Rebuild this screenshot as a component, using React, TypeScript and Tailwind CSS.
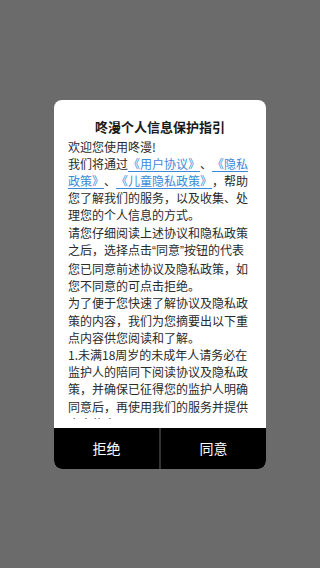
export default function App() {
  const link = "text-[#3a8ad8] underline decoration-[#3a8ad8] underline-offset-2";
  const quote = "font-['Liberation_Sans',sans-serif]";
  return (
    <div className="h-[568px] w-full bg-[#6b6b6b] flex items-center justify-center font-['Noto_Sans_CJK_SC','Noto_Sans',sans-serif] [text-spacing-trim:space-all]">
      <div className="w-[212px] h-[369px] bg-white rounded-[8px] overflow-hidden flex flex-col">
        {/* Title */}
        <h1 className="pt-[17px] text-center text-[13px] leading-[20px] font-bold text-[#1a1a1a]">
          咚漫个人信息保护指引
        </h1>

        {/* Scrolling body, line breaks kept as on the device */}
        <div className="mt-[1px] mb-[9px] flex-1 overflow-hidden px-[14px] text-[12px] leading-[17.2px] text-[#2a2a2a] whitespace-nowrap">
          <p>欢迎您使用咚漫!</p>
          <p>
            我们将通过<a className={link}>《用户协议》</a>、<a className={link}>《隐私</a>
            <br />
            <a className={link}>政策》</a>、<a className={link}>《儿童隐私政策》</a>，帮助
            <br />
            您了解我们的服务，以及收集、处
            <br />
            理您的个人信息的方式。
          </p>
          <p>
            请您仔细阅读上述协议和隐私政策
            <br />
            之后，选择点击<span className={quote}>“</span>同意<span className={quote}>”</span>按钮的代表
            <br />
            您已同意前述协议及隐私政策，如
            <br />
            您不同意的可点击拒绝。
          </p>
          <p>
            为了便于您快速了解协议及隐私政
            <br />
            策的内容，我们为您摘要出以下重
            <br />
            点内容供您阅读和了解。
          </p>
          <p>
            1.未满18周岁的未成年人请务必在
            <br />
            监护人的陪同下阅读协议及隐私政
            <br />
            策，并确保已征得您的监护人明确
            <br />
            同意后，再使用我们的服务并提供
            <br />
            个人信息。
          </p>
        </div>

        {/* Actions */}
        <div className="h-[41px] flex bg-black">
          <button className="flex-1 text-white text-[14px] flex items-center justify-center">拒绝</button>
          <div className="w-[2px] bg-[#333333]" />
          <button className="flex-1 text-white text-[14px] flex items-center justify-center">同意</button>
        </div>
      </div>
    </div>
  );
}
